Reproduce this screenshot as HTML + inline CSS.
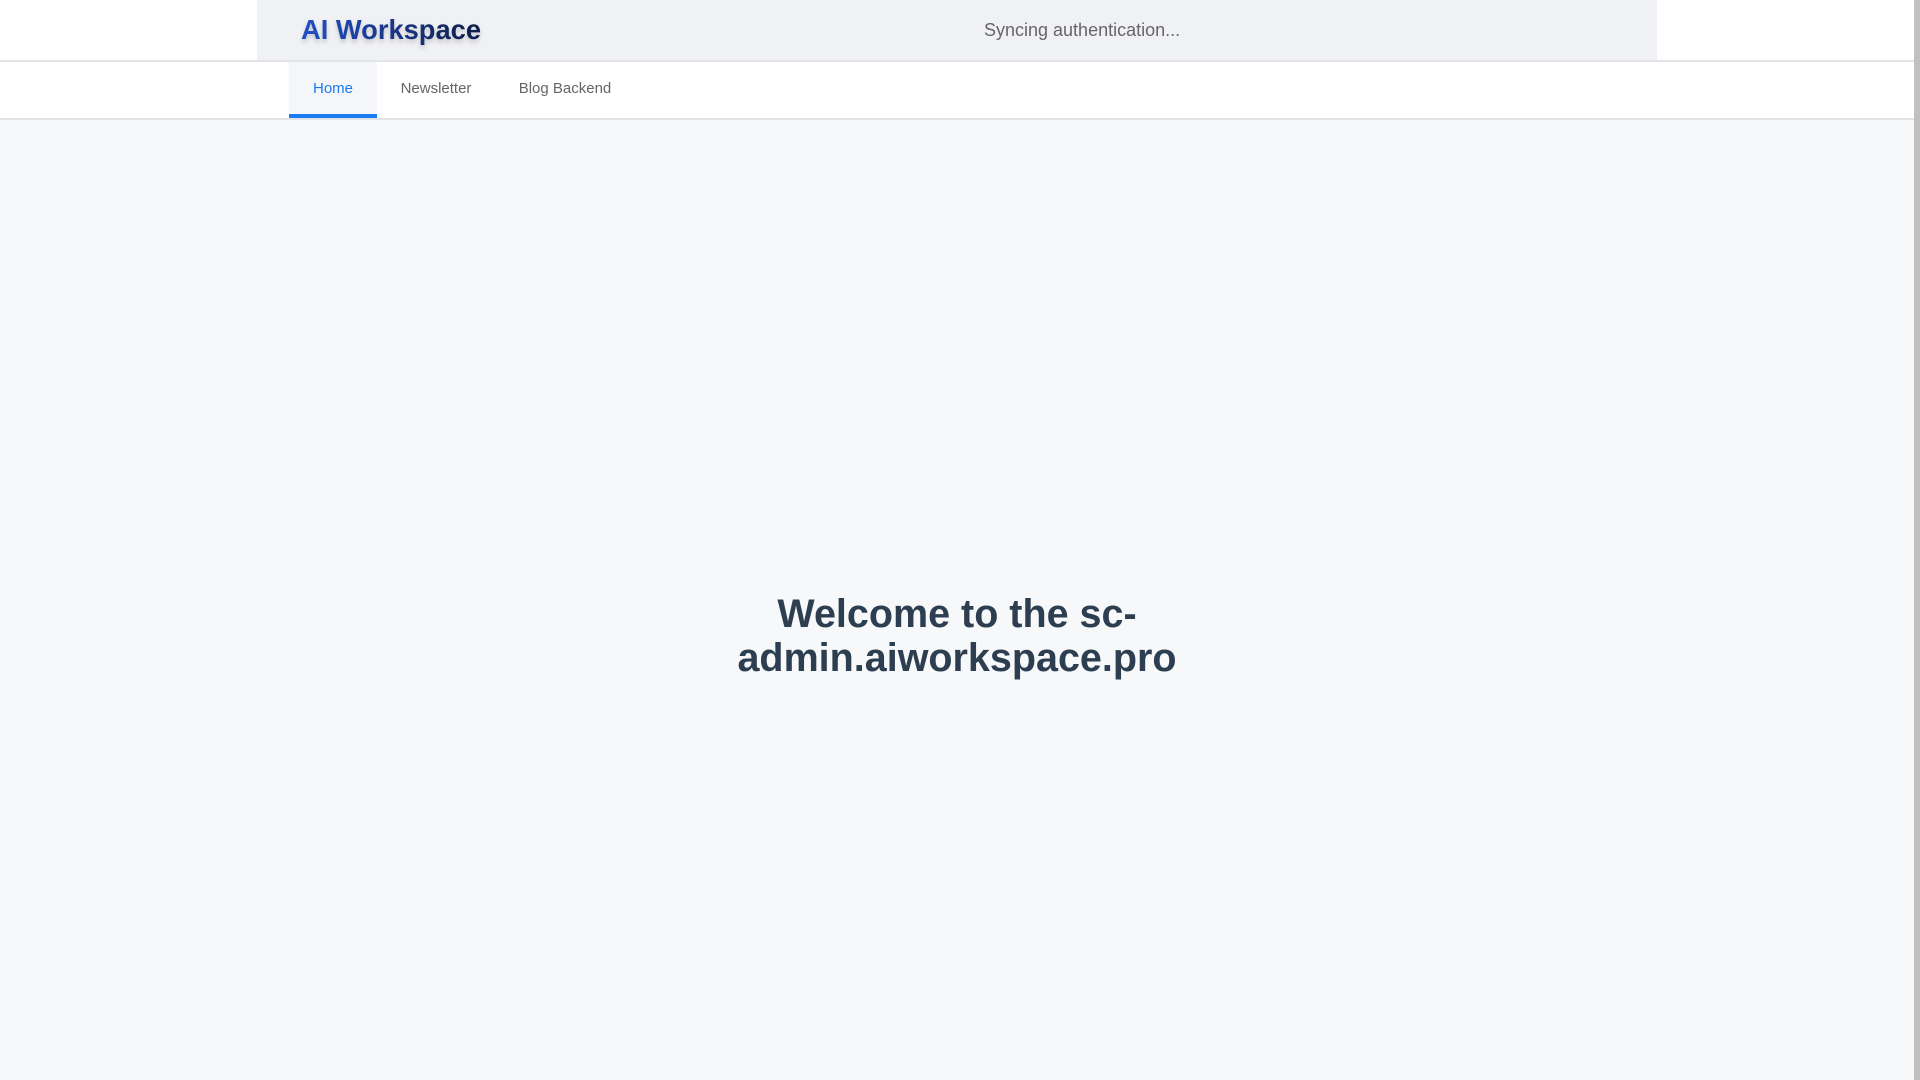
<!DOCTYPE html>
<html><head><meta charset="utf-8"><style>
html,body{margin:0;padding:0;}
body{width:1920px;height:1080px;overflow:hidden;background:#f7f8fa;font-family:"Liberation Sans",Arial,sans-serif;position:relative;}
.top{position:absolute;left:0;top:0;width:1914px;height:60px;background:#fff;border-bottom:2px solid #e2e4e8;}
.hdr{position:absolute;left:257px;top:0;width:1400px;height:60px;background:#f0f1f5;}
.logo{position:absolute;left:44px;top:14px;font-size:27.3px;font-weight:bold;color:#1a3fa8;background:linear-gradient(90deg,#2350c8,#0f1d48);-webkit-background-clip:text;background-clip:text;color:transparent;filter:drop-shadow(0 3px 2px rgba(0,0,0,0.18));}
.sync{position:absolute;left:727px;top:20px;font-size:18px;color:#666;}
.nav{position:absolute;left:0;top:62px;width:1914px;height:56px;background:#fff;border-bottom:2px solid #e3e4e7;}
.tab{position:absolute;top:0;height:56px;line-height:54px;font-size:15px;color:#666;text-align:center;}
.tab.on{background:#f5f6f9;color:#1a7cf2;border-bottom:4px solid #1a7cf2;height:52px;}
h1{position:absolute;left:657px;width:600px;top:592px;margin:0;text-align:center;font-size:39.5px;line-height:44px;font-weight:bold;color:#2c3e50;}
.sb{position:absolute;left:1914px;top:0;width:6px;height:1080px;background:#c1c1c1;}
</style></head><body>
<div class="top"><div class="hdr"><div class="logo">AI Workspace</div><div class="sync">Syncing authentication...</div></div></div>
<div class="nav">
<div class="tab on" style="left:289px;width:88px">Home</div>
<div class="tab" style="left:390px;width:92px">Newsletter</div>
<div class="tab" style="left:510px;width:110px">Blog Backend</div>
</div>
<h1>Welcome to the sc-<br>admin.aiworkspace.pro</h1>
<div class="sb"></div>
</body></html>
